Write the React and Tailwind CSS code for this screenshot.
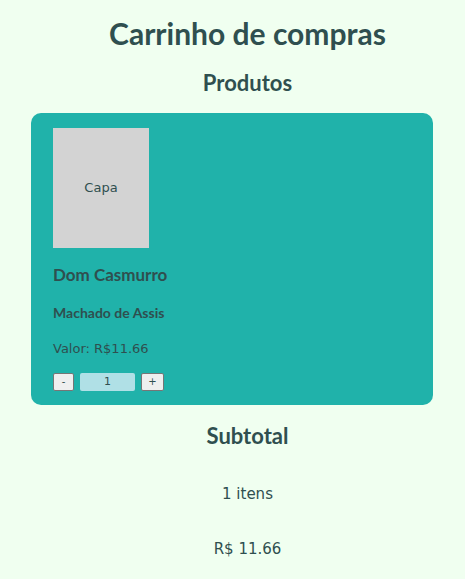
import React, { useState } from "react";

const App = () => {
  const [qty, setQty] = useState(1);
  const price = 11.66;

  return (
    <div className="min-h-[579px] bg-[#f0fff0] text-[#2f4f4f] font-['Lato',sans-serif]">
      <div className="pl-[30px] pt-[15px] text-center">
        <h1 className="text-[30px] font-bold leading-[36px]">Carrinho de compras</h1>
        <h2 className="mt-[18px] text-[22px] font-bold leading-[28px]">Produtos</h2>
      </div>

      {/* card */}
      <div className="ml-[31px] mt-[16px] w-[402px] rounded-[10px] bg-[#20b2aa] px-[22px] pt-[15px] pb-[14px]">
        <div className="flex h-[120px] w-[96px] items-center justify-center bg-[#d3d3d3] font-['DejaVu_Sans',sans-serif] text-[13px]">
          Capa
        </div>
        <h3 className="mt-[17px] text-[17px] font-bold leading-[20px]">Dom Casmurro</h3>
        <h4 className="mt-[20px] text-[14px] font-bold leading-[16px]">Machado de Assis</h4>
        <p className="mt-[20px] font-['DejaVu_Sans',sans-serif] text-[13px] leading-[16px]">
          Valor: R${price.toFixed(2)}
        </p>
        <div className="mt-[16px] flex items-center gap-[6px] font-['DejaVu_Sans',sans-serif]">
          <button
            className="h-[18px] w-[21px] rounded-[2px] border border-[#767676] bg-[#efefef] text-[10px] leading-none"
            onClick={() => setQty(Math.max(0, qty - 1))}
          >
            -
          </button>
          <div className="flex h-[18px] w-[55px] items-center justify-center rounded-[2px] bg-[#b0e0e6] text-[11px]">
            {qty}
          </div>
          <button
            className="h-[18px] w-[23px] rounded-[2px] border border-[#767676] bg-[#efefef] text-[10px] leading-none"
            onClick={() => setQty(qty + 1)}
          >
            +
          </button>
        </div>
      </div>

      <div className="pl-[30px] text-center">
        <h2 className="mt-[17px] text-[22px] font-bold leading-[28px]">Subtotal</h2>
        <div className="font-['DejaVu_Sans',sans-serif] text-[15px] leading-[20px]">
          <p className="mt-[34px]">{qty} itens</p>
          <p className="mt-[35px]">R$ {(price * qty).toFixed(2)}</p>
        </div>
      </div>
    </div>
  );
};

export default App;
